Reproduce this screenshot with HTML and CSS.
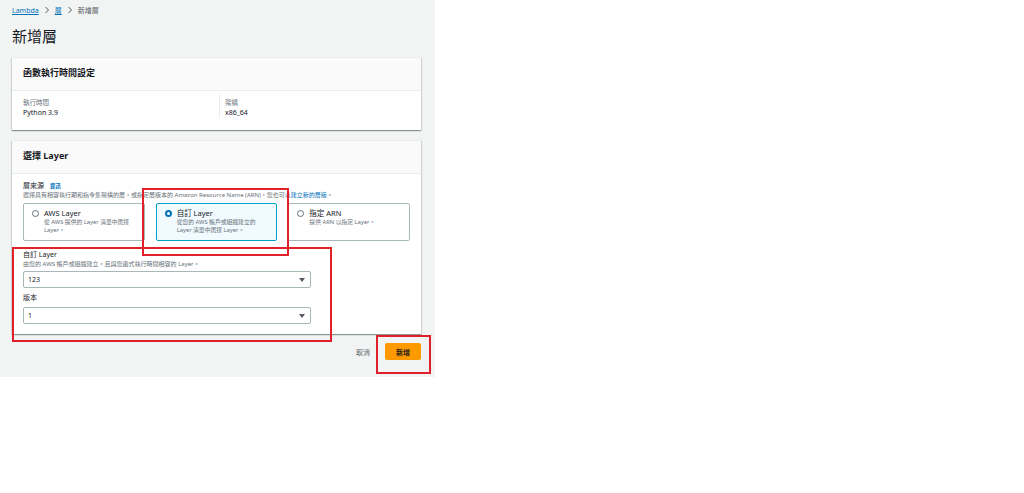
FILE: index.html
```html
<!DOCTYPE html>
<html lang="zh-Hant">
<head>
<meta charset="UTF-8" />
<title>新增層</title>
<link rel="stylesheet" href="styles.css">
</head>
<body>
  <div class="page">
    <nav class="breadcrumb">
      <a href="#">Lambda</a>
      <svg class="chev" viewBox="0 0 6 8"><path d="M1.5 1 L4.5 4 L1.5 7" /></svg>
      <a href="#">層</a>
      <svg class="chev" viewBox="0 0 6 8"><path d="M1.5 1 L4.5 4 L1.5 7" /></svg>
      <span>新增層</span>
    </nav>
    <h1>新增層</h1>

    <section class="card">
      <div class="card-head">函數執行時間設定</div>
      <div class="card-body kv">
        <div class="kv-col">
          <div class="kv-label">執行時間</div>
          <div class="kv-value">Python 3.9</div>
        </div>
        <div class="kv-col">
          <div class="kv-label">架構</div>
          <div class="kv-value">x86_64</div>
        </div>
      </div>
    </section>

    <section class="card">
      <div class="card-head">選擇 Layer</div>
      <div class="card-body form">
        <div class="field-label">層來源 <a class="info" href="#">資訊</a></div>
        <div class="field-desc">選擇具有相容執行期和指令集架構的層，或指定層版本的 Amazon Resource Name (ARN)，您也可以<a href="#">建立新的層版</a>。</div>
        <div class="tiles">
          <label class="tile">
            <span class="radio"></span>
            <span class="tile-text">
              <span class="tile-title">AWS Layer</span>
              <span class="tile-desc">從 AWS 提供的 Layer 清單中選擇 Layer。</span>
            </span>
          </label>
          <label class="tile selected">
            <span class="radio"></span>
            <span class="tile-text">
              <span class="tile-title">自訂 Layer</span>
              <span class="tile-desc">從您的 AWS 帳戶或組織建立的 Layer 清單中選擇 Layer。</span>
            </span>
          </label>
          <label class="tile">
            <span class="radio"></span>
            <span class="tile-text">
              <span class="tile-title">指定 ARN</span>
              <span class="tile-desc">提供 ARN 以指定 Layer。</span>
            </span>
          </label>
        </div>

        <div class="field-label gap">自訂 Layer</div>
        <div class="field-desc">由您的 AWS 帳戶或組織建立，且與您函式執行時間相容的 Layer。</div>
        <div class="select">123<span class="caret"></span></div>

        <div class="field-label gap-sm">版本</div>
        <div class="select tight">1<span class="caret"></span></div>
      </div>
    </section>

    <div class="actions">
      <button class="btn-link">取消</button>
      <button class="btn-primary">新增</button>
    </div>

    <div class="mark mark-tile"></div>
    <div class="mark mark-fields"></div>
    <div class="mark mark-button"></div>
  </div>
</body>
</html>
```

FILE: styles.css
```css
html, body {
  margin: 0;
  padding: 0;
  background: #ffffff;
  font-family: "Noto Sans", "Noto Sans CJK TC", sans-serif;
  color: #16191f;
}
.page {
  position: relative;
  width: 435px;
  height: 377px;
  box-sizing: border-box;
  padding: 4px 14px 0 12px;
  background: #f2f3f3;
  display: flex;
  flex-direction: column;
}
a {
  color: #0073bb;
  text-decoration: none;
}
.breadcrumb {
  display: flex;
  align-items: center;
  gap: 5px;
  height: 12px;
  font-size: 7px;
  color: #545b64;
}
.breadcrumb a {
  text-decoration: underline;
}
.chev {
  width: 6px;
  height: 8px;
  fill: none;
  stroke: #545b64;
  stroke-width: 1;
}
h1 {
  margin: 10px 0 11px;
  font-size: 15px;
  line-height: 20px;
  font-weight: 400;
  color: #16191f;
}
.card {
  background: #fff;
  box-shadow: 0 1px 1px rgba(0, 28, 36, 0.3), 1px 1px 1px rgba(0, 28, 36, 0.1), -1px 1px 1px rgba(0, 28, 36, 0.1);
  border-top: 1px solid #eaeded;
  margin-bottom: 10px;
}
.card-head {
  height: 32px;
  line-height: 30px;
  padding: 0 11px;
  background: #fafafa;
  border-bottom: 1px solid #eaeded;
  font-size: 9px;
  font-weight: 700;
}
.kv {
  display: flex;
  padding: 3px 0 12px;
}
.kv-col {
  flex: 1;
  padding: 4px 11px 0;
}
.kv-col + .kv-col {
  border-left: 1px solid #eaeded;
  padding-left: 5px;
}
.kv-label {
  font-size: 6.5px;
  line-height: 10px;
  color: #687078;
}
.kv-value {
  font-size: 7px;
  line-height: 10px;
}
.form {
  padding: 7px 11px 10px;
}
.field-label {
  font-size: 7px;
  line-height: 10px;
}
.field-label.gap { margin-top: 9px; }
.field-label.gap-sm { margin-top: 5px; }
.info {
  font-size: 5.5px;
  font-weight: 700;
  margin-left: 4px;
}
.field-desc {
  font-size: 6px;
  line-height: 8px;
  color: #687078;
  white-space: nowrap;
}
.tiles {
  display: grid;
  grid-template-columns: repeat(3, 1fr);
  gap: 11px;
  margin-top: 4px;
}
.tile {
  display: flex;
  gap: 5px;
  height: 38px;
  box-sizing: border-box;
  padding: 5px 8px 0 8px;
  border: 1px solid #aab7b8;
  border-radius: 2px;
}
.tile.selected {
  background: #f1faff;
  border-color: #00a1c9;
}
.radio {
  flex: none;
  width: 7px;
  height: 7px;
  box-sizing: border-box;
  margin-top: 1px;
  border: 1px solid #687078;
  border-radius: 50%;
  background: #fff;
}
.selected .radio {
  border: 2px solid #0073bb;
}
.tile-text {
  display: flex;
  flex-direction: column;
}
.tile-title {
  font-size: 7.5px;
  line-height: 9px;
}
.tile-desc {
  font-size: 5.8px;
  line-height: 8px;
  color: #687078;
  max-width: 90px;
}
.select {
  position: relative;
  width: 288px;
  height: 17px;
  box-sizing: border-box;
  margin-top: 3px;
  padding: 0 4px;
  border: 1px solid #aab7b8;
  border-radius: 2px;
  background: #fff;
  font-size: 7px;
  line-height: 15px;
}
.select.tight {
  margin-top: 4px;
}
.caret {
  position: absolute;
  right: 5px;
  top: 50%;
  margin-top: -2px;
  border-left: 3px solid transparent;
  border-right: 3px solid transparent;
  border-top: 4px solid #545b64;
}
.actions {
  display: flex;
  justify-content: flex-end;
  align-items: center;
  gap: 15px;
  margin-top: -1px;
}
.btn-link {
  border: none;
  background: none;
  padding: 0;
  font: inherit;
  font-size: 7px;
  color: #545b64;
}
.btn-primary {
  width: 36px;
  height: 17px;
  border: none;
  border-radius: 2px;
  background: #ff9900;
  font: inherit;
  font-size: 7px;
  font-weight: 700;
  color: #16191f;
}
.mark {
  position: absolute;
  border: 2px solid #e0212b;
  box-sizing: border-box;
}
.mark-tile { left: 142px; top: 188px; width: 147px; height: 68px; }
.mark-fields { left: 12px; top: 247px; width: 320px; height: 95px; }
.mark-button { left: 376px; top: 335px; width: 55px; height: 39px; }
```
